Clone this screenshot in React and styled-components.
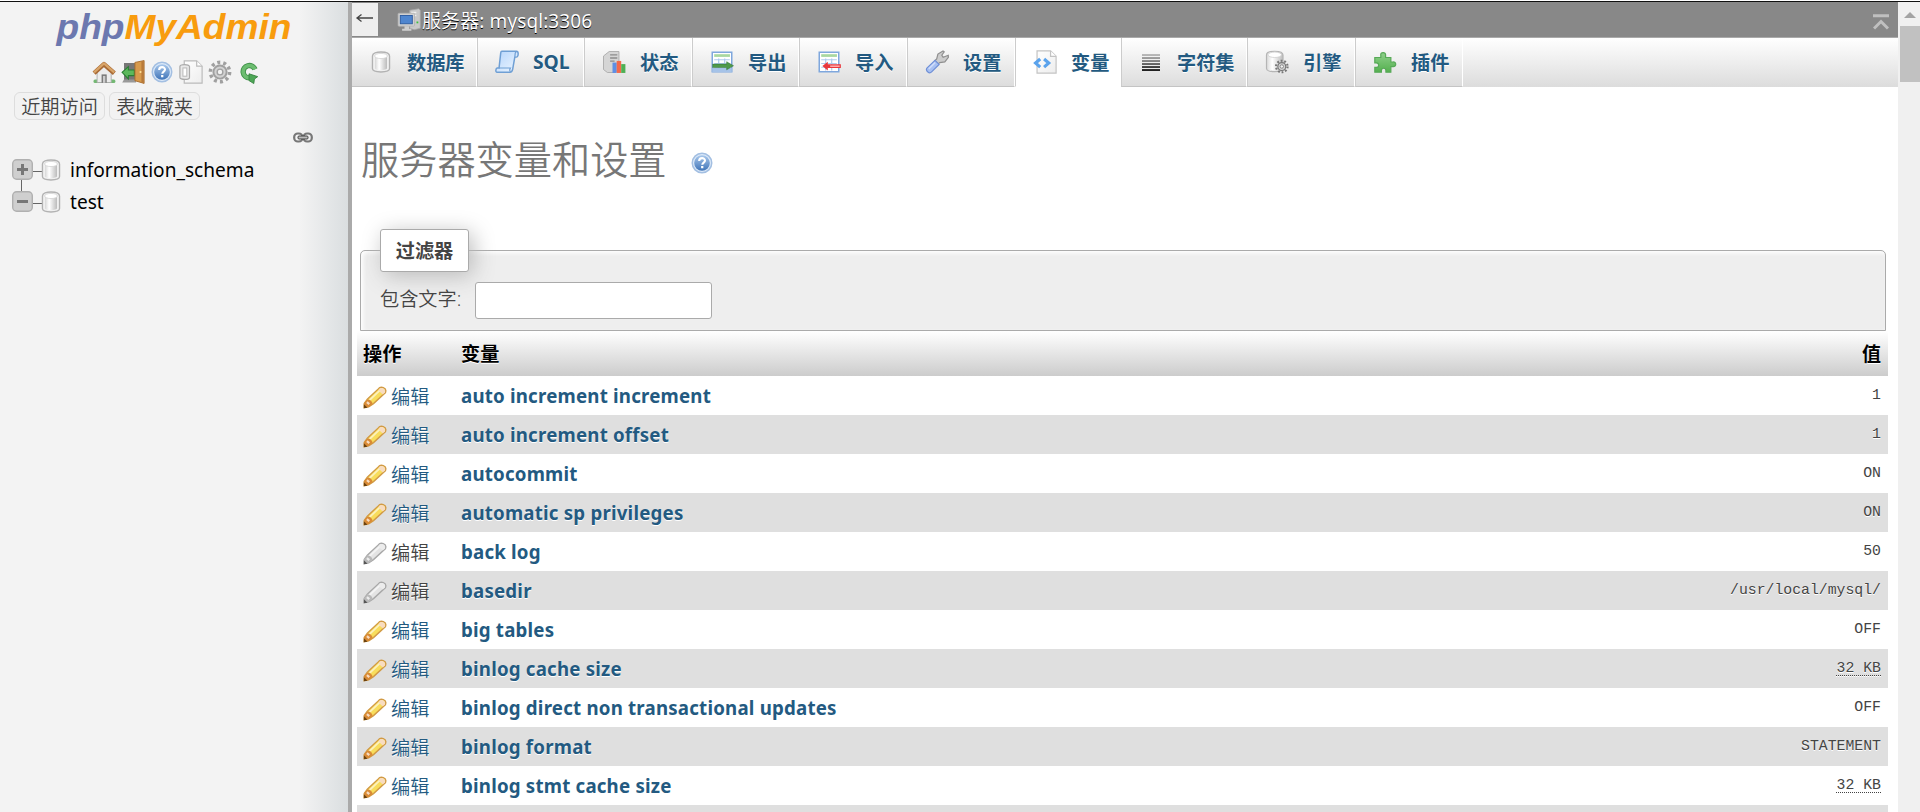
import React from "react";
import styled, { createGlobalStyle, css } from "styled-components";

const sans = `"Noto Sans", "Noto Sans CJK SC", sans-serif`;
const cjk = `"Open Sans", "Noto Sans CJK SC", sans-serif`;

const Global = createGlobalStyle`
  * { box-sizing: border-box; }
  body { margin: 0; background: #fff; overflow: hidden; font-family: ${cjk}; font-size: 19.2px; color: #444; }
  svg { display: block; flex: none; }
`;

const Screen = styled.div`
  display: flex;
  width: 1920px;
  height: 812px;
  padding-top: 1px;
  overflow: hidden;
`;
const Window = styled.div`
  display: flex;
  width: 100%;
  border-top: 1px solid #111;
`;
const Sidebar = styled.aside`
  flex: none;
  width: 352px;
  border-right: 4px solid #aaa;
  background: linear-gradient(to right, #f3f3f3 300px, #dadee0 348px);
  display: flex;
  flex-direction: column;
`;
const Logo = styled.svg`
  margin: 1px 0 0 50px;
  font-family: "Liberation Sans", sans-serif;
  font-style: italic;
  font-weight: 700;
  font-size: 35.5px;
`;
const QuickIcons = styled.div`
  display: flex;
  gap: 5px;
  margin: 7px 0 0 92px;
`;
const QuickLists = styled.div`
  display: flex;
  gap: 4px;
  margin: 8px 0 0 14px;
`;
const ListButton = styled.a`
  width: 91px;
  height: 28px;
  line-height: 27px;
  border: 1px solid #ddd;
  border-radius: 6px;
  background: #f2f2f2;
  text-align: center;
  white-space: nowrap;
  font-weight: 350;
`;
const LinkRow = styled.div`
  display: flex;
  padding: 12px 0 0 293px;
  height: 23px;
`;
const Tree = styled.ul`
  list-style: none;
  margin: 11px 0 0;
  padding: 0 0 0 12px;
`;
const TreeItem = styled.li`
  display: flex;
  align-items: center;
  height: 32px;
  color: #000;
  font-family: ${sans};
  font-size: 19.1px;
  svg + svg { margin-left: -4px; }
  span { margin: 0 0 0 7px; }
`;

const Main = styled.main`
  flex: none;
  width: 1546px;
`;
const ServerBar = styled.header`
  display: flex;
  height: 36px;
  background: #888;
  border-bottom: 1px solid #aaa;
  color: #fff;
  align-items: center;
`;
const Collapse = styled.div`
  width: 26px;
  height: 33px;
  background: #eee;
  display: flex;
  padding: 9px 0 0 3px;
  margin: 0 19px 0 0;
`;
const ServerName = styled.span`
  flex: 1;
  font-family: ${sans};
  font-size: 19px;
  letter-spacing: 0.1px;
  white-space: nowrap;
  text-shadow: 0 1px 0 #000;
  margin-left: 1px;
`;
const ToTop = styled.div`
  margin: 5px 9px 0 0;
`;
const Tabs = styled.nav`
  display: flex;
  height: 49px;
  background: linear-gradient(#fff, #dcdcdc);
`;
const Tab = styled.a`
  flex: none;
  width: ${p => p.$w}px;
  display: flex;
  align-items: center;
  gap: 14px;
  padding: 0 0 0 17px;
  border-left: ${p => (p.$first ? 0 : 1)}px solid #ccc;
  border-right: 1px solid #fff;
  border-bottom: 1px solid #c4c4c4;
  color: #235a81;
  font-weight: 700;
  white-space: nowrap;
  text-shadow: 0 1px 0 #fff;
  ${p => p.$active && css`background: #fff; border-bottom-color: #fff;`}
  span { padding-bottom: 1px; }
`;
const Heading = styled.h2`
  display: flex;
  align-items: center;
  gap: 23px;
  margin: 44px 0 0 9px;
  height: 56px;
  font-size: 38.2px;
  line-height: 56px;
  font-weight: 350;
  color: #777;
  svg { margin-top: 7px; }
`;
const Fieldset = styled.section`
  display: flex;
  flex-direction: column;
  margin: 63px 12px 0 8px;
  height: 81px;
  border: 1px solid #aaa;
  border-radius: 5px 5px 0 0;
  background: #eee;
  box-shadow: inset 2px 2px 4px #fff;
  padding-left: 19px;
`;
const Legend = styled.div`
  flex: none;
  width: 89px;
  height: 43px;
  margin-top: -22px;
  line-height: 42px;
  text-align: center;
  font-weight: 700;
  border: 1px solid #aaa;
  border-radius: 3px;
  background: #fff;
  box-shadow: 4px 4px 22px #bbb;
`;
const Field = styled.label`
  display: flex;
  align-items: center;
  margin-top: 10px;
  font-weight: 350;
  span { width: 95px; padding-bottom: 5px; }
`;
const Input = styled.input`
  width: 237px;
  height: 37px;
  border: 1px solid #aaa;
  border-radius: 3px;
  background: #fff;
  outline: none;
`;
const Table = styled.div`
  margin: 0 10px 0 5px;
`;
const HeadRow = styled.div`
  display: flex;
  height: 45px;
  line-height: 46px;
  background: linear-gradient(#fff, #ccc);
  color: #000;
  font-weight: 700;
  text-shadow: 0 1px 0 #fff;
`;
const Row = styled.div`
  display: flex;
  height: 39px;
  line-height: 39px;
  background: ${p => (p.$odd ? "#dfdfdf" : "#fff")};
  text-shadow: 0 1px 0 #fff;
`;
const Action = styled.div`
  width: 104px;
  padding-left: 6px;
  display: flex;
  align-items: center;
  gap: 4px;
  color: ${p => (p.$off ? "#444" : "#235a81")};
  font-weight: ${p => (p.$head ? 700 : 350)};
  ${p => p.$head && css`color: #000;`}
  svg { margin-top: 2px; }
  span { padding-top: 2px; }
`;
const Name = styled.div`
  flex: 1;
  white-space: nowrap;
`;
const VarName = styled(Name)`
  font-family: ${sans};
  font-weight: 700;
  font-size: 18.7px;
  letter-spacing: 0.2px;
  color: #235a81;
`;
const Value = styled.div`
  padding-right: 7px;
  font-family: ${p => (p.$head ? cjk : `"Liberation Mono", monospace`)};
  font-size: ${p => (p.$head ? 19 : 14.8)}px;
  color: ${p => (p.$head ? "#000" : "#444")};
`;
const Abbr = styled.abbr`
  text-decoration: underline dotted #444 1px;
  text-underline-offset: 3px;
`;
const Scrollbar = styled.div`
  flex: none;
  width: 22px;
  background: #f0f0f0;
  padding: 10px 0 0 2px;
`;
const Arrow = styled.div`
  width: 0;
  margin: 0 0 8px 4px;
  border: 6px solid transparent;
  border-top: 0;
  border-bottom-color: #a3a3a3;
`;
const Thumb = styled.div`
  height: 56px;
  background: #c1c1c1;
`;
const Defs = styled.svg`
  position: absolute;
`;

const Svg = ({ children, s = 24, ...p }) => (
  <svg width={s} height={s} viewBox="0 0 16 16" {...p}>{children}</svg>
);

const Gradients = () => (
  <Defs width="0" height="0">
    <defs>
      <linearGradient id="cyl"><stop offset="0" stopColor="#d8d8d8" /><stop offset=".35" stopColor="#fff" /><stop offset="1" stopColor="#bcbcbc" /></linearGradient>
      <linearGradient id="blue" x2="0" y2="1"><stop offset="0" stopColor="#a9c8ec" /><stop offset="1" stopColor="#3f74b8" /></linearGradient>
      <linearGradient id="paper" x2="1" y2="1"><stop offset="0" stopColor="#fff" /><stop offset="1" stopColor="#ededed" /></linearGradient>
      <linearGradient id="scroll" x2="1" y2="1"><stop offset="0" stopColor="#b5d5fb" /><stop offset="1" stopColor="#eef6ff" /></linearGradient>
      <linearGradient id="green" x2="0" y2="1"><stop offset="0" stopColor="#8ed08a" /><stop offset="1" stopColor="#55b04f" /></linearGradient>
    </defs>
  </Defs>
);

const Cylinder = () => (
  <>
    <path d="M2.3 4c0-3.6 11.4-3.6 11.4 0v8.4c0 3-11.4 3-11.4 0z" fill="#f0f0f0" stroke="#b2b2b2" strokeWidth=".9" />
    <path d="M4 4.6v7.4c0 1.8 8 1.8 8 0V4.6z" fill="url(#cyl)" />
    <ellipse cx="8" cy="4" rx="4.3" ry="1.7" fill="#fff" stroke="#d2d2d2" strokeWidth=".5" />
  </>
);
const Database = p => <Svg {...p}><Cylinder /></Svg>;
const Gear = ({ c = "#a0a0a0" }) => (
  <>
    <circle cx="8" cy="8" r="6.4" fill="none" stroke={c} strokeWidth="2.4" strokeDasharray="2 2.02" />
    <circle cx="8" cy="8" r="4.4" fill="#d2d2d2" stroke={c} strokeWidth="1.3" />
    <circle cx="8" cy="8" r="1.9" fill="#f3f3f3" stroke={c} strokeWidth=".9" />
  </>
);
const Help = p => (
  <Svg {...p}>
    <circle cx="8" cy="8" r="6.5" fill="#dce9f8" stroke="#a3bfe2" strokeWidth="1" />
    <circle cx="8" cy="8" r="5.2" fill="url(#blue)" />
    <path d="M6.1 6.6c0-2.5 3.9-2.4 3.9-.2 0 1.3-1.8 1.3-1.8 2.7" fill="none" stroke="#fff" strokeWidth="1.4" />
    <rect x="7.4" y="10" width="1.5" height="1.5" fill="#fff" />
  </Svg>
);
const Home = () => (
  <Svg>
    <rect x="1" y="13" width="14.6" height="2.4" rx="1" fill="#73b873" />
    <path d="M3.4 8L8 3.6 12.8 8v7H3.4z" fill="#ececec" stroke="#aaa" strokeWidth=".6" />
    <rect x="6.4" y="9.6" width="3.4" height="5.6" fill="#777" />
    <rect x="7.3" y="10.6" width="1.6" height="4.6" fill="#ccc" />
    <path d="M1.4 8.8L8 2.8 14.9 8.8" fill="none" stroke="#a96a35" strokeWidth="3" strokeLinejoin="round" />
    <path d="M1.4 8.2L8 2.3 14.8 8.2" fill="none" stroke="#d8a468" strokeWidth="1.5" strokeLinejoin="round" />
  </Svg>
);
const Exit = () => (
  <Svg>
    <path d="M2 2h9v12H2z" fill="#777" />
    <path d="M2 13h8v2H.8z" fill="#999" />
    <path d="M.7 8.2l4.2-3.8v2.2h4v3.8h-4v2.2z" fill="#5cb85c" stroke="#287e32" strokeWidth=".7" />
    <path d="M9.3 1.6L15.4.4v15.2l-6.1-1.8z" fill="#d79a4c" stroke="#a56a2b" strokeWidth=".6" />
    <path d="M13.6 1v14.2l1.6.3V.7z" fill="#b87a3a" />
    <circle cx="13" cy="8" r=".7" fill="#ffe29a" />
  </Svg>
);
const Docs = () => (
  <Svg>
    <path d="M3.5.6h8.3l3.6 3.5v11.3H3.5z" fill="url(#paper)" stroke="#bbb" strokeWidth=".8" />
    <path d="M11.8.6v3.5h3.6" fill="#fff" stroke="#bbb" strokeWidth=".8" />
    <path d="M.6 4.4C.6 2.6 7 2.6 7 4.4v7.2c0 1.8-6.4 1.8-6.4 0z" fill="#e9e9e9" stroke="#aaa" strokeWidth=".8" />
    <rect x="2.6" y="5.3" width="2.6" height="5.5" fill="#fff" stroke="#bbb" strokeWidth=".7" />
  </Svg>
);
const Reload = () => (
  <Svg>
    <path d="M12 6.2A4.1 4.1 0 1 0 8.2 11.9" fill="none" stroke="#3f9148" strokeWidth="3.6" />
    <path d="M12 6.2A4.1 4.1 0 1 0 8.2 11.9" fill="none" stroke="#6cbd70" strokeWidth="2.4" />
    <path d="M8 9.2l5.8 1.9-2.2 1.6-.4 3L8 13.7z" fill="#4ea757" stroke="#37833f" strokeWidth=".6" />
  </Svg>
);
const Server = () => (
  <Svg>
    <path d="M8.5 1.5l6-1 1 1v12l-4 1-3-1z" fill="#c9c9c9" stroke="#a5a5a5" strokeWidth=".5" />
    <path d="M9.5 3h3.4M9.5 5h3.4" stroke="#eee" strokeWidth=".9" />
    <rect x="13" y="9" width="1.2" height="1.2" fill="#3ec23e" />
    <rect x=".7" y="3.5" width="11" height="8.6" rx=".6" fill="#d0d0d0" stroke="#b0b0b0" strokeWidth=".5" />
    <rect x="2.2" y="5" width="8" height="5.5" fill="#4f86cf" stroke="#2c5a9e" strokeWidth=".6" />
    <path d="M5 12.2h3v1.6h1.6v1.3H3.4v-1.3H5z" fill="#cfcfcf" />
  </Svg>
);
const Sql = () => (
  <Svg>
    <path d="M4.6.8h9.8c1.4 0 1.3 3.2.3 3.8l-1.5.2-1.4 8c-.2 1.2-.8 2-1.8 2H1.4c-1.3 0-.9-2.6 0-2.8h1.3L3.8 2C3.9 1.2 4.1.8 4.6.8z" fill="url(#scroll)" stroke="#6f9fd4" strokeWidth="1" />
    <path d="M13.2 4.6l.3-2.6c.1-.6.5-.9 1-.9M2.7 12h7.6c-.5.8-.5 2 0 2.5" fill="none" stroke="#6f9fd4" strokeWidth=".8" />
  </Svg>
);
const Status = () => (
  <Svg>
    <path d="M1 4L4.8 1h6.5v12.2L8 15H3.6L1 13z" fill="#d5d5d5" stroke="#aaa" strokeWidth=".6" />
    <path d="M5.4 3.2h4.8M5.4 5.3h4.8M5.4 7.4h3" stroke="#8c8c8c" strokeWidth=".9" />
    <rect x="7" y="8.4" width="2.8" height="6.9" fill="#5f8fe4" /><rect x="9.8" y="7.3" width="3" height="8" fill="#f4694b" /><rect x="12.8" y="9.4" width="2.8" height="5.9" fill="#4fb054" />
  </Svg>
);
const Grid = () => (
  <>
    <rect x="1.5" y="1.5" width="13" height="13" fill="#fff" stroke="#7fa7dd" strokeWidth="1" />
    <rect x="2.8" y="2.8" width="10.5" height="1.8" fill="#a9d7a0" />
    <path d="M2.8 6.5h10.4M2.8 9h10.4M2.8 11.5h10.4M5.8 5.6v8M9.8 5.6v8" stroke="#aecbed" strokeWidth=".8" />
  </>
);
const Export = () => (
  <Svg><Grid /><rect x="1.5" y="12" width="13" height="2.7" fill="#a6c3e8" /><path d="M1.8 9.4h9.3V7.8l4.6 2.7-4.6 2.7v-1.5H1.8z" fill="#4f9a4a" stroke="#2c6b2c" strokeWidth=".3" /></Svg>
);
const Import = () => (
  <Svg><Grid /><path d="M3.6 10.7l3.6-2.9v1.7h8.7v2.5H7.2v1.6z" fill="#e9373c" /><path d="M8.8 10.8h6.3" stroke="#ffb0b0" strokeWidth="1" /></Svg>
);
const Wrench = () => (
  <Svg>
    <path d="M7.8 5.9L8.6 2.7 12 .6l.8.6-1.6 2.3.9 1.3 3.4-1.3.1 1.4-2.4 3-3.3.5-1.2.9-2.2-2.1z" fill="#ccc" stroke="#8f8f8f" strokeWidth=".8" />
    <path d="M6.7 6.9l2.7 2.7-5 5c-1.5 1.6-4.6-1-3-2.7z" fill="#a7c0f2" stroke="#6f8fd6" strokeWidth=".8" />
    <path d="M6.7 8.4l-4.2 4.2" stroke="#cfdcfa" strokeWidth="1" />
  </Svg>
);
const Variables = () => (
  <Svg>
    <path d="M2.7.6h9l3.7 3.6v11.2H2.7z" fill="url(#paper)" stroke="#c3c3c3" strokeWidth=".8" />
    <path d="M11.7.6v3.6h3.7" fill="#fff" stroke="#c3c3c3" strokeWidth=".8" />
    <path d="M4.8 6L1.7 8.7l3.1 2.7M7.4 6l3.1 2.7-3.1 2.7" fill="none" stroke="#5ba3ec" strokeWidth="2.1" />
  </Svg>
);
const Charset = () => (
  <Svg>
    {["#aaa", "#8c8c8c", "#707070", "#4a4a4a", "#222", "#000"].map((c, i) => (
      <rect key={c} x="2" y={2.8 + i * 2} width="12" height="1.1" fill={c} />
    ))}
  </Svg>
);
const Engine = () => (
  <Svg>
    <path d="M1 3.3c0-3.3 11-3.3 11 0v9c0 2.8-11 2.8-11 0z" fill="url(#cyl)" stroke="#b5b5b5" strokeWidth=".8" />
    <ellipse cx="6.5" cy="3.2" rx="4.5" ry="1.8" fill="#fff" stroke="#ccc" strokeWidth=".5" />
    <g transform="translate(6.4 6.2) scale(.6)"><Gear c="#777" /></g>
  </Svg>
);
const Plugin = () => (
  <Svg>
    <path d="M1.2 5h4V3.5C4.6 1.2 8.8 1 8.4 3.5V5h3.5v3h1.3c2.6-.4 2.6 3.4 0 3.1h-1.3v3.7H8.6v-1.2c0-1.9-3-1.9-3 0v1.2H1.2v-3.2h1c2.1 0 2.1-3 0-3h-1z" fill="url(#green)" stroke="#57a957" strokeWidth=".8" />
  </Svg>
);
const Pencil = ({ off }) => {
  const c = off ? ["#e4e4e4", "#a8a8a8", "#ececec", "#b9b9b9", "#555"] : ["#f8dd5c", "#d19a45", "#f8dcc0", "#d98a35", "#6b4210"];
  return (
    <Svg>
      <path d="M3 9.3L10.2 2.6c1.4-2 6-1.1 4.8 2.4L7 12.4 3.8 14.6.7 15.2.8 12.3z" fill={c[0]} stroke={c[1]} strokeWidth=".9" />
      <path d="M4.2 10.2l7-6.6" stroke="#fff" strokeOpacity=".6" strokeWidth="1.2" />
      <path d="M10.7 2.9c1-1.7 4.8-.8 3.9 2.1l-1.4 1.4-2.9-2.7z" fill={c[2]} />
      <path d="M3 9.6c1.6 0 3.4 1.3 3.3 3l-2.5 2-3 .5V12z" fill={c[3]} />
      <path d="M2.6 11.4l1.6 1.3" stroke={c[2]} strokeWidth="1.5" />
      <path d="M.6 12.8l2.4 2.4-2.4.3z" fill={c[4]} />
    </Svg>
  );
};
const Chain = () => (
  <svg width="20" height="11" viewBox="0 0 20 11">
    <rect x="1.2" y="1.5" width="8.3" height="8" rx="3.6" fill="none" stroke="#777" strokeWidth="2.2" />
    <rect x="10.5" y="1.5" width="8.3" height="8" rx="3.6" fill="none" stroke="#777" strokeWidth="2.2" />
    <rect x="5" y="4" width="10" height="3" rx="1" fill="#bbb" stroke="#444" />
  </svg>
);
const Toggle = ({ open, joined }) => (
  <svg width="31" height="32" viewBox="0 0 31 32">
    {joined && <path d="M9.5 26v6" stroke="#666" />}
    {open && <path d="M9.5 0v6" stroke="#666" />}
    <path d="M21 17.5h10" stroke="#666" />
    <rect x=".7" y="5.7" width="19.6" height="19.6" rx="4" fill="#cfcfcf" stroke="#b0b0b0" strokeWidth="1.4" />
    <path d="M5 15.5h11" stroke="#777" strokeWidth="3" />
    {!open && <path d="M10.5 10v11" stroke="#777" strokeWidth="3" />}
  </svg>
);

const tabs = [
  ["数据库", 125, Database], ["SQL", 107, Sql], ["状态", 108, Status], ["导出", 107, Export], ["导入", 108, Import],
  ["设置", 108, Wrench], ["变量", 106, Variables], ["字符集", 126, Charset], ["引擎", 108, Engine], ["插件", 108, Plugin],
];
const rows = [
  ["auto increment increment", "1"], ["auto increment offset", "1"], ["autocommit", "ON"],
  ["automatic sp privileges", "ON"], ["back log", "50", true], ["basedir", "/usr/local/mysql/", true],
  ["big tables", "OFF"], ["binlog cache size", "32 KB"], ["binlog direct non transactional updates", "OFF"],
  ["binlog format", "STATEMENT"], ["binlog stmt cache size", "32 KB"],
];

export default function App() {
  return (
    <Screen>
      <Global />
      <Gradients />
      <Window>
        <Sidebar>
          <Logo width="260" height="50">
            <text x="6.5" y="36" textLength="235" lengthAdjust="spacingAndGlyphs">
              <tspan fill="#6c78af">php</tspan><tspan fill="#f89c0e">MyAdmin</tspan>
            </text>
          </Logo>
          <QuickIcons>
            <Home /><Exit /><Help /><Docs /><Svg><Gear /></Svg><Reload />
          </QuickIcons>
          <QuickLists>
            <ListButton>近期访问</ListButton>
            <ListButton>表收藏夹</ListButton>
          </QuickLists>
          <LinkRow><Chain /></LinkRow>
          <Tree>
            <TreeItem><Toggle joined /><Database /><span>information_schema</span></TreeItem>
            <TreeItem><Toggle open /><Database /><span>test</span></TreeItem>
          </Tree>
        </Sidebar>
        <Main>
          <ServerBar>
            <Collapse>
              <svg width="20" height="12" viewBox="0 0 20 12"><path d="M2 6h16M6.5 2.5L2 6l4.5 3.5" fill="none" stroke="#444" strokeWidth="1.3" /></svg>
            </Collapse>
            <Server />
            <ServerName>服务器: mysql:3306</ServerName>
            <ToTop>
              <svg width="16" height="16" viewBox="0 0 16 16"><path d="M0 1.7h16M1 14.5l7-7 7 7" fill="none" stroke="#c0c0c0" strokeWidth="3" /></svg>
            </ToTop>
          </ServerBar>
          <Tabs>
            {tabs.map(([label, w, Icon], i) => (
              <Tab key={label} $w={w} $first={i === 0} $active={i === 6}><Icon /><span>{label}</span></Tab>
            ))}
          </Tabs>
          <Heading>服务器变量和设置 <Help /></Heading>
          <Fieldset>
            <Legend>过滤器</Legend>
            <Field><span>包含文字:</span><Input /></Field>
          </Fieldset>
          <Table>
            <HeadRow>
              <Action $head>操作</Action><Name>变量</Name><Value $head>值</Value>
            </HeadRow>
            {rows.map(([name, value, off], i) => (
              <Row key={name} $odd={i % 2 === 1}>
                <Action $off={off}><Pencil off={off} /><span>编辑</span></Action>
                <VarName>{name}</VarName>
                <Value>{value === "32 KB" ? <Abbr>{value}</Abbr> : value}</Value>
              </Row>
            ))}
            <Row $odd />
          </Table>
        </Main>
        <Scrollbar><Arrow /><Thumb /></Scrollbar>
      </Window>
    </Screen>
  );
}
